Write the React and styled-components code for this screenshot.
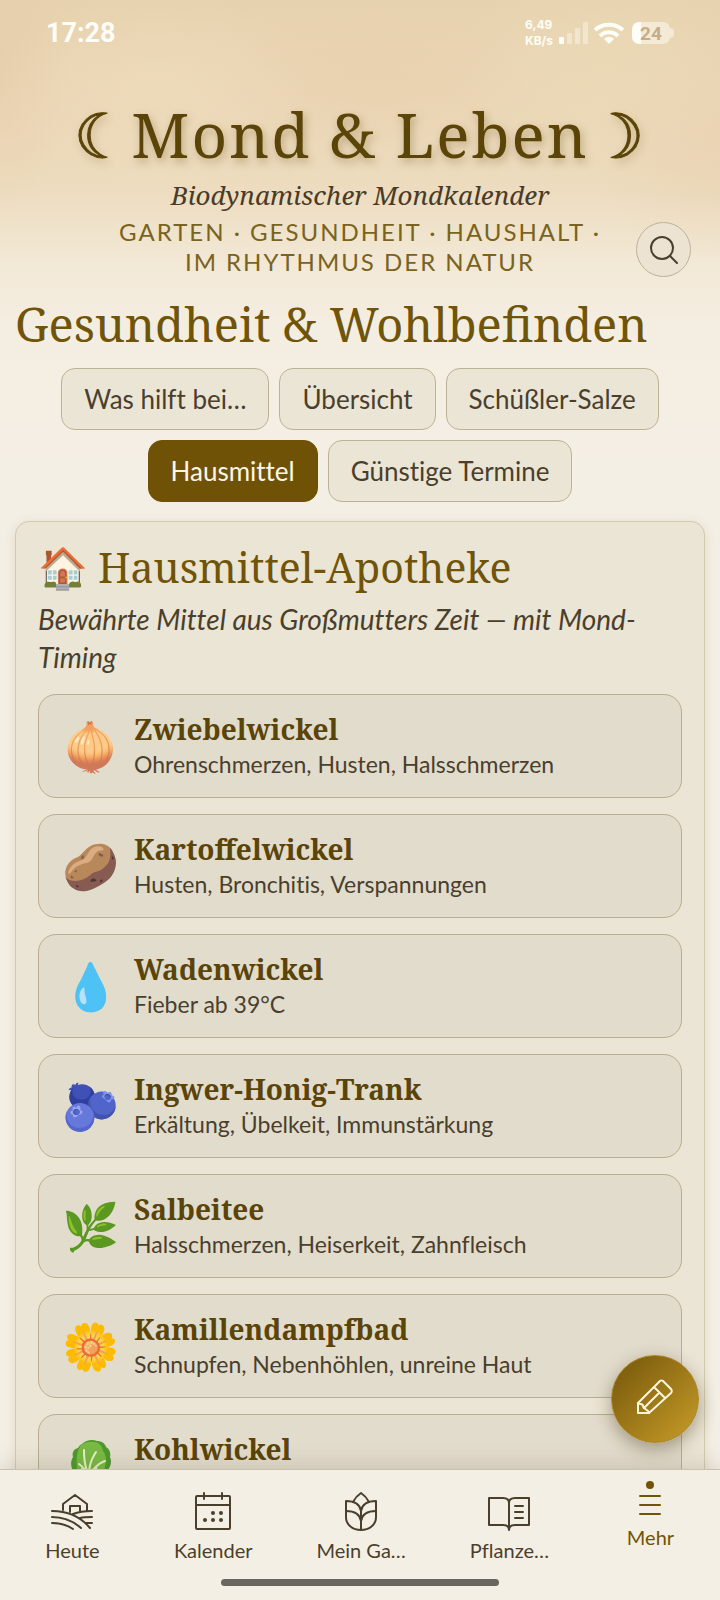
import React from 'react';
import { useState } from 'react';
import styled, { createGlobalStyle, css } from 'styled-components';

const serif = '"Noto Serif", "DejaVu Serif", serif';
const sans = 'Lato, "Noto Sans", sans-serif';

const GlobalStyle = createGlobalStyle`
  * {
    box-sizing: border-box;
  }
  body {
    margin: 0;
    font-family: ${sans};
    color: #4a3f2c;
    background: #f4efe5;
  }
  h1, h2, h3, p, ul {
    margin: 0;
    padding: 0;
    font-weight: 400;
  }
  button {
    font-family: inherit;
    color: inherit;
    cursor: pointer;
  }
  button, p {
    font-variant-ligatures: none;
  }
`;

const Shell = styled.div`
  position: relative;
  display: flex;
  flex-direction: column;
  height: 100vh;
  overflow: hidden;
  background:
    radial-gradient(ellipse 160px 100px at 22% 90px, rgba(240, 222, 188, 0.55), transparent),
    radial-gradient(ellipse 150px 110px at 84% 70px, rgba(236, 220, 184, 0.55), transparent),
    radial-gradient(ellipse 160px 70px at 52% 80px, rgba(228, 202, 164, 0.3), transparent),
    radial-gradient(ellipse 70px 160px at 0% 60px, rgba(228, 198, 162, 0.35), transparent),
    radial-gradient(ellipse 130px 110px at 100% 150px, rgba(230, 204, 170, 0.4), transparent),
    linear-gradient(#e7d2af 0, #ebd7b7 120px, #eddcbf 190px, #f2e8d5 260px, #f4eee2 330px, #f4efe5 480px);
`;

const StatusBar = styled.div`
  display: flex;
  align-items: center;
  justify-content: space-between;
  flex: none;
  height: 66px;
  padding: 0 46px;
  color: #fffdf8;
`;

const Clock = styled.time`
  font: 700 27px Roboto, ${sans};
`;

const StatusIcons = styled.div`
  display: flex;
  align-items: center;
  gap: 6px;
`;

const Speed = styled.div`
  font: 700 12px/16px Inter, ${sans};
`;

const Battery = styled.div`
  position: relative;
  display: flex;
  align-items: center;
  justify-content: center;
  width: 38px;
  height: 22px;
  margin: 0 4px 0 2px;
  border-radius: 7px;
  background: linear-gradient(90deg, #fffdf8 24%, rgba(255, 253, 248, 0.5) 24%);
  color: #c4ae8a;
  font: 700 19px Roboto, ${sans};

  &::after {
    content: "";
    position: absolute;
    left: 100%;
    top: 6px;
    width: 4px;
    height: 10px;
    border-radius: 0 5px 5px 0;
    background: rgba(255, 253, 248, 0.5);
  }
`;

const Header = styled.header`
  position: relative;
  flex: none;
  padding: 26px 104px 0;
  text-align: center;
`;

const Brand = styled.h1`
  display: flex;
  align-items: baseline;
  justify-content: center;
  margin: 0 -80px;
  font: 400 62px/84px ${serif};
  letter-spacing: 2px;
  white-space: nowrap;
  color: #5b4408;
  text-shadow: 2px 4px 8px rgba(91, 68, 8, 0.35);
`;

const Moon = styled.span`
  font-family: "DejaVu Sans", sans-serif;
  -webkit-text-stroke: 1px;
`;

const Subtitle = styled.p`
  font: italic 400 26px/32px ${serif};
  color: #4a3b28;
`;

const Tagline = styled.p`
  margin-top: 6px;
  font-size: 24px;
  line-height: 30px;
  letter-spacing: 2px;
  text-transform: uppercase;
  color: #7a6320;
`;

const SearchButton = styled.button`
  position: absolute;
  right: 29px;
  bottom: 0;
  display: flex;
  align-items: center;
  justify-content: center;
  width: 55px;
  height: 55px;
  padding: 0;
  border: 1px solid #bdb19a;
  border-radius: 50%;
  background: #ece3d2;
`;

const Content = styled.main`
  flex: 1;
  min-height: 0;
  overflow: hidden;
  padding: 0 15px;
`;

const PageTitle = styled.h2`
  margin-top: 15px;
  font: 400 47px/64px ${serif};
  color: #705407;
`;

const Tabs = styled.div`
  display: flex;
  flex-wrap: wrap;
  justify-content: center;
  gap: 10px;
  margin-top: 12px;
`;

const Tab = styled.button`
  height: 62px;
  padding: 0 22px;
  border: 1px solid #bdb294;
  border-radius: 14px;
  background: #eae5d5;
  font-size: 26px;

  ${({ $active }) => $active && css`
    border-color: #705206;
    background: #705206;
    color: #fbf6ea;
  `}
`;

const Card = styled.section`
  margin-top: 19px;
  padding: 14px 22px 24px;
  border: 1px solid #d3caae;
  border-radius: 14px;
  background: #ebe5d5;
  box-shadow: 0 2px 12px rgba(91, 68, 8, 0.12);
`;

const CardTitle = styled.h2`
  display: flex;
  align-items: center;
  gap: 10px;
  font: 400 41px/62px ${serif};
  color: #705407;
`;

const CardEmoji = styled.span`
  font-size: 40px;
`;

const Intro = styled.p`
  margin: 2px 0 18px;
  font-size: 28px;
  line-height: 38px;
  font-style: italic;
`;

const Remedies = styled.ul`
  display: flex;
  flex-direction: column;
  gap: 16px;
  list-style: none;
`;

const Remedy = styled.button`
  display: flex;
  align-items: center;
  gap: 17px;
  width: 100%;
  height: 104px;
  padding: 0 24px;
  border: 1px solid #b9ae90;
  border-radius: 18px;
  background: #e2dccc;
  text-align: left;
`;

const RemedyIcon = styled.span`
  display: flex;
  justify-content: center;
  flex: none;
  width: 54px;
  font-size: 46px;
  line-height: 56px;
`;

const RemedyText = styled.span`
  display: flex;
  flex-direction: column;
`;

const RemedyName = styled.strong`
  font: 700 28px/36px ${serif};
  font-variant-ligatures: normal;
  color: #5b4408;
`;

const RemedyUse = styled.span`
  font-size: 23px;
  line-height: 34px;
`;

const EditButton = styled.button`
  position: absolute;
  right: 21px;
  bottom: 157px;
  display: flex;
  align-items: center;
  justify-content: center;
  width: 88px;
  height: 88px;
  padding: 0 0 4px;
  border: 1px solid #ac8629;
  border-radius: 50%;
  background: linear-gradient(135deg, #74560b, #c79c27);
  box-shadow: 0 6px 18px rgba(60, 45, 10, 0.4);
  color: #fff6dc;
`;

const BottomNav = styled.nav`
  position: relative;
  flex: none;
  border-top: 1px solid #cbc2ae;
  background: #f4efe4;
  box-shadow: 0 -4px 20px rgba(74, 63, 44, 0.16);
`;

const NavItems = styled.div`
  display: flex;
  justify-content: space-around;
  height: 109px;
  padding: 20px 0 0 3px;
`;

const NavItem = styled.button`
  position: relative;
  display: flex;
  flex-direction: column;
  align-items: center;
  gap: 5px;
  height: 76px;
  min-width: 75px;
  padding: 0;
  border: 0;
  background: none;
  font-size: 20px;
  line-height: 26px;

  ${({ $active }) => $active && css`
    margin-top: -9px;
    color: #705407;

    &::before {
      content: "";
      position: absolute;
      top: 0;
      width: 8px;
      height: 8px;
      border-radius: 50%;
      background: #705407;
    }
  `}
`;

const HomeBar = styled.div`
  width: 278px;
  max-width: 50%;
  height: 7px;
  margin: 0 auto 14px;
  border-radius: 4px;
  background: #69665f;
`;

const Line = styled.svg`
  display: block;
  flex: none;
  fill: none;
  stroke: currentColor;
  stroke-width: 2;
  stroke-linecap: round;
  stroke-linejoin: round;
`;

const FieldIcon = () => (
  <Line width="42" height="42" viewBox="0 0 42 42">
    <path d="M12 20V14L24 5l12 9v7M19 22v-6h10v5" />
    <path d="M1 21c16 0 28 5 38 17M1 27c12 0 21 4 29 11M1 33c8 0 15 2 21 6M22 24c5-2 10-3 19-3M29 28c4-1 7-1 12-1M35 33h6" />
  </Line>
);

const CalendarIcon = () => (
  <Line width="42" height="42" viewBox="0 0 42 42">
    <rect x="4" y="6" width="34" height="33" rx="1" />
    <path d="M4 15h34M12 3v6M30 3v6" />
    <g fill="currentColor" stroke="none">
      <circle cx="21" cy="23" r="2" />
      <circle cx="29" cy="23" r="2" />
      <circle cx="13" cy="30" r="2" />
      <circle cx="21" cy="30" r="2" />
      <circle cx="29" cy="30" r="2" />
    </g>
  </Line>
);

const PlantIcon = () => (
  <Line width="42" height="42" viewBox="0 0 42 42">
    <path d="M13 12c2-4 5-7 8-9 3 2 6 5 8 9" />
    <path d="M21 21c-1-6-6-10-15-10v16c0 8 7 13 15 13s15-5 15-13V11c-9 0-14 4-15 10zM21 21v19" />
    <path d="M6 21c9 0 14 4 15 10 1-6 6-10 15-10" />
  </Line>
);

const BookIcon = () => (
  <Line width="44" height="42" viewBox="0 0 44 42">
    <path d="M2 8h14c3 0 6 1 6 5 0-4 3-5 6-5h14v27H28c-3 0-6 1-6 5 0-4-3-5-6-5H2zM22 13v26" />
    <path d="M28 16h8M28 22h8M28 28h8" />
  </Line>
);

const MenuIcon = () => (
  <Line width="42" height="38" viewBox="0 0 42 38">
    <path d="M11 15h20M11 24h20M11 33h20" />
  </Line>
);

const PencilIcon = () => (
  <Line width="36" height="36" viewBox="0 0 36 36">
    <path d="M1 34V24L22 3c1-2 4-2 5 0l7 7c1 1 1 3 0 4L12 34zM17 8l11 11M22 14L7 29" />
    <path d="M1 24c1 2 5 0 5 3 0 4 5 2 6 7" />
  </Line>
);

const SearchIcon = () => (
  <Line width="28" height="28" viewBox="0 0 28 28">
    <circle cx="12" cy="12" r="11" />
    <path d="M20 20l7 7" />
  </Line>
);

const SignalIcon = () => (
  <svg width="29" height="22" viewBox="0 0 29 22" fill="currentColor">
    <rect x="0" y="15" width="5" height="7" rx="1" />
    <g opacity="0.4">
      <rect x="8" y="11" width="5" height="11" rx="1" />
      <rect x="16" y="6" width="5" height="16" rx="1" />
      <rect x="24" y="0" width="5" height="22" rx="1" />
    </g>
  </svg>
);

const WifiIcon = () => (
  <svg width="30" height="22" viewBox="0 0 30 22" fill="none" stroke="currentColor" strokeWidth="4">
    <path d="M1 8c8-7 20-7 28 0M6 14c5-5 13-5 18 0" />
    <path d="M10 17c3-3 7-3 10 0l-5 5z" fill="currentColor" stroke="none" />
  </svg>
);

const CabbageIcon = () => (
  <svg width="52" height="56" viewBox="0 0 52 56">
    <path d="M18 6c-2 1-3 2-4 4-5 1-6 6-5 9-3 5-2 10 0 14 1 10 8 17 17 18 10-1 16-8 17-18 4-4 5-10 3-14 1-5-1-8-4-10-1-4-5-6-9-6-5-2-11-1-15 3z" fill="#4d9a2a" />
    <path d="M17 7c-4 6-5 13-4 22 1 12 6 19 13 23 9-4 14-13 15-24 2-6 1-11-2-15-1-6-5-9-9-9-5-1-9 0-13 3z" fill="#79b944" />
    <path d="M25 52c-7-5-9-13-8-22l8 2 8-3c2 9-1 18-8 23z" fill="#e3f1c6" />
    <path d="M25 36c0-9 3-16 7-22M24 35c-3-6-4-13-4-23M22 34c-2-4-4-6-7-8M27 36c3-6 8-11 14-13M27 38c4-3 9-5 14-5" fill="none" stroke="#e3f1c6" strokeWidth="2" strokeLinecap="round" />
  </svg>
);

const tabs = ['Was hilft bei…', 'Übersicht', 'Schüßler-Salze', 'Hausmittel', 'Günstige Termine'];

const remedies = [
  { icon: '🧅', name: 'Zwiebelwickel', use: 'Ohrenschmerzen, Husten, Halsschmerzen' },
  { icon: '🥔', name: 'Kartoffelwickel', use: 'Husten, Bronchitis, Verspannungen' },
  { icon: '💧', name: 'Wadenwickel', use: 'Fieber ab 39°C' },
  { icon: '🫐', name: 'Ingwer-Honig-Trank', use: 'Erkältung, Übelkeit, Immunstärkung' },
  { icon: '🌿', name: 'Salbeitee', use: 'Halsschmerzen, Heiserkeit, Zahnfleisch' },
  { icon: '🌼', name: 'Kamillendampfbad', use: 'Schnupfen, Nebenhöhlen, unreine Haut' },
  { icon: <CabbageIcon />, name: 'Kohlwickel', use: '' },
];

const navItems = [
  { label: 'Heute', Icon: FieldIcon },
  { label: 'Kalender', Icon: CalendarIcon },
  { label: 'Mein Ga…', Icon: PlantIcon },
  { label: 'Pflanze…', Icon: BookIcon },
  { label: 'Mehr', Icon: MenuIcon },
];

function App() {
  const [tab, setTab] = useState('Hausmittel');
  const [page, setPage] = useState('Mehr');

  return (
    <>
      <GlobalStyle />
      <Shell>
        <StatusBar>
          <Clock>17:28</Clock>
          <StatusIcons>
            <Speed>6,49<br />KB/s</Speed>
            <SignalIcon />
            <WifiIcon />
            <Battery>24</Battery>
          </StatusIcons>
        </StatusBar>

        <Header>
          <Brand>
            <Moon>☾</Moon>
            <span>Mond &amp; Leben</span>
            <Moon>☽</Moon>
          </Brand>
          <Subtitle>Biodynamischer Mondkalender</Subtitle>
          <Tagline>Garten · Gesundheit · Haushalt · Im Rhythmus der Natur</Tagline>
          <SearchButton aria-label="Suche"><SearchIcon /></SearchButton>
        </Header>

        <Content>
          <PageTitle>Gesundheit &amp; Wohlbefinden</PageTitle>
          <Tabs>
            {tabs.map((name) => (
              <Tab key={name} $active={name === tab} onClick={() => setTab(name)}>{name}</Tab>
            ))}
          </Tabs>

          <Card>
            <CardTitle><CardEmoji>🏠</CardEmoji>Hausmittel-Apotheke</CardTitle>
            <Intro>Bewährte Mittel aus Großmutters Zeit — mit Mond-Timing</Intro>
            <Remedies>
              {remedies.map(({ icon, name, use }) => (
                <li key={name}>
                  <Remedy>
                    <RemedyIcon>{icon}</RemedyIcon>
                    <RemedyText>
                      <RemedyName>{name}</RemedyName>
                      <RemedyUse>{use || '\u00a0'}</RemedyUse>
                    </RemedyText>
                  </Remedy>
                </li>
              ))}
            </Remedies>
          </Card>
        </Content>

        <EditButton aria-label="Notiz schreiben"><PencilIcon /></EditButton>

        <BottomNav>
          <NavItems>
            {navItems.map(({ label, Icon }) => (
              <NavItem key={label} $active={label === page} onClick={() => setPage(label)}>
                <Icon />
                {label}
              </NavItem>
            ))}
          </NavItems>
          <HomeBar />
        </BottomNav>
      </Shell>
    </>
  );
}

export default App;
